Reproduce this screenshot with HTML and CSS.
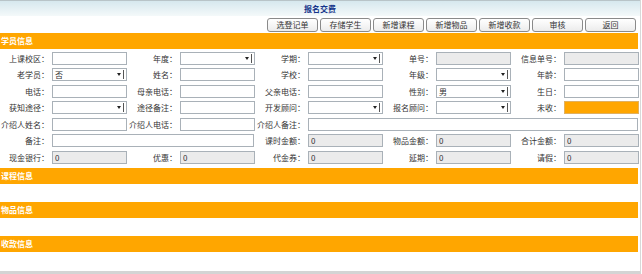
FILE: index.html
```html
<!DOCTYPE html>
<html lang="zh-CN">
<head>
    <meta charset="UTF-8">
    <title>报名交费</title>
    <link rel="stylesheet" href="styles.css">
</head>
<body>
<div class="page">
    <div class="title-bar">报名交费</div>

    <div class="toolbar">
        <button type="button" class="btn">选登记单</button>
        <button type="button" class="btn">存储学生</button>
        <button type="button" class="btn">新增课程</button>
        <button type="button" class="btn">新增物品</button>
        <button type="button" class="btn">新增收款</button>
        <button type="button" class="btn">审核</button>
        <button type="button" class="btn">返回</button>
    </div>

    <div class="section-bar">学员信息</div>

    <div class="form-grid">
        <label>上课校区：</label><span class="field"><input type="text"></span>
        <label>年度：</label><span class="field"><span class="sel"></span></span>
        <label>学期：</label><span class="field"><span class="sel"></span></span>
        <label>单号：</label><span class="field"><input type="text" class="ro" readonly></span>
        <label>信息单号：</label><span class="field"><input type="text" class="ro" readonly></span>

        <label>老学员：</label><span class="field"><span class="sel">否</span></span>
        <label>姓名：</label><span class="field"><input type="text"></span>
        <label>学校：</label><span class="field"><input type="text"></span>
        <label>年级：</label><span class="field"><span class="sel"></span></span>
        <label>年龄：</label><span class="field"><input type="text"></span>

        <label>电话：</label><span class="field"><input type="text"></span>
        <label>母亲电话：</label><span class="field"><input type="text"></span>
        <label>父亲电话：</label><span class="field"><input type="text"></span>
        <label>性别：</label><span class="field"><span class="sel">男</span></span>
        <label>生日：</label><span class="field"><input type="text"></span>

        <label>获知途径：</label><span class="field"><span class="sel"></span></span>
        <label>途径备注：</label><span class="field"><input type="text"></span>
        <label>开发顾问：</label><span class="field"><span class="sel"></span></span>
        <label>报名顾问：</label><span class="field"><span class="sel"></span></span>
        <label>未收：</label><span class="field"><input type="text" class="due" readonly></span>

        <label>介绍人姓名：</label><span class="field"><input type="text"></span>
        <label>介绍人电话：</label><span class="field"><input type="text"></span>
        <label>介绍人备注：</label><span class="field span-5"><input type="text"></span>

        <label>备注：</label><span class="field span-3"><input type="text"></span>
        <label>课时金额：</label><span class="field"><input type="text" class="ro" value="0" readonly></span>
        <label>物品金额：</label><span class="field"><input type="text" class="ro" value="0" readonly></span>
        <label>合计金额：</label><span class="field"><input type="text" class="ro" value="0" readonly></span>

        <label>现金银行：</label><span class="field"><input type="text" class="ro" value="0" readonly></span>
        <label>优惠：</label><span class="field"><input type="text" class="ro" value="0" readonly></span>
        <label>代金券：</label><span class="field"><input type="text" class="ro" value="0" readonly></span>
        <label>延期：</label><span class="field"><input type="text" class="ro" value="0" readonly></span>
        <label>请假：</label><span class="field"><input type="text" class="ro" value="0" readonly></span>
    </div>

    <div class="section-bar">课程信息</div>
    <div class="section-body"></div>

    <div class="section-bar">物品信息</div>
    <div class="section-body"></div>

    <div class="section-bar">收款信息</div>
    <div class="section-body"></div>
</div>
</body>
</html>
```

FILE: styles.css
```css
body {
    margin: 0;
    background: #fff;
    font-family: "Noto Sans CJK SC", "DejaVu Sans", sans-serif;
    font-size: 8px;
    color: #333;
}
.page {
    width: 640px;
    border-right: 1px solid #d8d8d8;
    border-bottom: 3px solid #d4d4d4;
    padding-bottom: 1px;
}
.title-bar {
    height: 16px;
    line-height: 16px;
    border-top: 1px solid #b8c4c8;
    box-sizing: border-box;
    background: linear-gradient(#d6e8ee, #f4f9fa);
    text-align: center;
    font-weight: bold;
    color: #14348a;
}
.toolbar {
    display: flex;
    justify-content: flex-end;
    gap: 2px;
    height: 17px;
    padding: 2px 4px 0 0;
    box-sizing: border-box;
}
.btn {
    width: 51px;
    height: 14px;
    padding: 0;
    border: 1px solid #8a8a8a;
    border-radius: 3px;
    background: linear-gradient(#ffffff, #ececec);
    font-family: inherit;
    font-size: 8px;
    color: #333;
    line-height: 12px;
}
.section-bar {
    height: 16px;
    line-height: 16px;
    width: 638px;
    background: #ffa600;
    color: #fff;
    font-weight: bold;
    padding-left: 1px;
    box-sizing: border-box;
}
.section-body {
    height: 18px;
}
.form-grid {
    display: grid;
    grid-template-columns: repeat(5, 52px 76px);
    grid-auto-rows: 16.5px;
    padding: 1px 0 2px;
    align-items: center;
}
.form-grid label {
    text-align: right;
    padding-right: 3px;
    white-space: nowrap;
}
.field {
    display: flex;
    align-items: center;
}
.field input,
.sel {
    box-sizing: border-box;
    width: 75px;
    height: 13px;
    margin: 0;
    padding: 0 2px;
    border: 1px solid #a9b1b8;
    background: #fff;
    font-family: inherit;
    font-size: 8px;
    color: #333;
    line-height: 11px;
}
.span-3 {
    grid-column: span 3;
}
.span-3 input {
    width: 202px;
}
.span-5 {
    grid-column: span 5;
}
.span-5 input {
    width: 330px;
}
.field input.ro {
    background: #ebebeb;
}
.field input.due {
    background: #ffa600;
    border-color: #e0b060;
}
.sel {
    position: relative;
    display: block;
}
.sel::after {
    content: "";
    position: absolute;
    right: 5px;
    top: 4px;
    border-left: 2px solid transparent;
    border-right: 2px solid transparent;
    border-top: 3px solid #222;
}
.sel::before {
    content: "";
    position: absolute;
    right: 2px;
    top: 1px;
    bottom: 1px;
    border-right: 1px solid #555;
}
```
